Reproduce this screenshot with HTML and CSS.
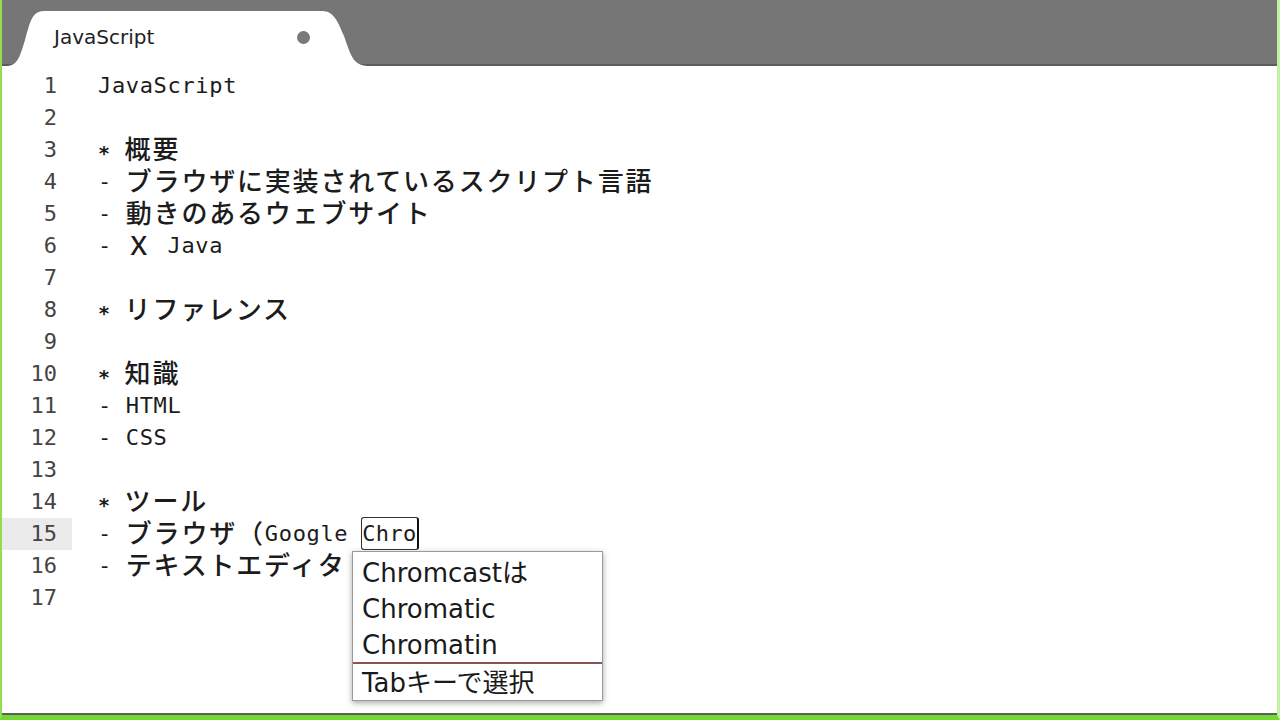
FILE: index.html
```html
<!DOCTYPE html>
<html lang="ja">
<head>
  <meta charset="UTF-8" />
  <title>JavaScript</title>
  <link rel="stylesheet" href="styles.css">
</head>
<body>
  <div class="frame">
    <!-- Tab bar -->
    <header class="tabbar">
      <div class="tab">
        <svg class="tab-shape" width="370" height="66" viewBox="0 0 370 66">
          <path d="M4,66 C16,66 18,56 23,40 C28,22 30,11 42,11 L320,11 C332,11 336,22 342,36 C348,52 350,66 366,66 Z" fill="#ffffff"/>
        </svg>
        <span class="tab-label">JavaScript</span>
        <span class="tab-dot"></span>
      </div>
    </header>

    <!-- Editor -->
    <main class="editor">
      <div class="line"><span class="num">1</span><span class="code">JavaScript</span></div>
      <div class="line"><span class="num">2</span><span class="code"></span></div>
      <div class="line"><span class="num">3</span><span class="code"><span class="star">*</span> <span class="jp">概要</span></span></div>
      <div class="line"><span class="num">4</span><span class="code">- <span class="jp">ブラウザに実装されているスクリプト言語</span></span></div>
      <div class="line"><span class="num">5</span><span class="code">- <span class="jp">動きのあるウェブサイト</span></span></div>
      <div class="line"><span class="num">6</span><span class="code">- <span class="jp">Ｘ</span> Java</span></div>
      <div class="line"><span class="num">7</span><span class="code"></span></div>
      <div class="line"><span class="num">8</span><span class="code"><span class="star">*</span> <span class="jp">リファレンス</span></span></div>
      <div class="line"><span class="num">9</span><span class="code"></span></div>
      <div class="line"><span class="num">10</span><span class="code"><span class="star">*</span> <span class="jp">知識</span></span></div>
      <div class="line"><span class="num">11</span><span class="code">- HTML</span></div>
      <div class="line"><span class="num">12</span><span class="code">- CSS</span></div>
      <div class="line"><span class="num">13</span><span class="code"></span></div>
      <div class="line"><span class="num">14</span><span class="code"><span class="star">*</span> <span class="jp">ツール</span></span></div>
      <div class="line current"><span class="num">15</span><span class="code">- <span class="jp">ブラウザ（</span>Google <span class="composing">Chro</span></span></div>
      <div class="line"><span class="num">16</span><span class="code">- <span class="jp">テキストエディタ</span></span></div>
      <div class="line"><span class="num">17</span><span class="code"></span></div>

      <!-- Autocomplete popup -->
      <ul class="suggest">
        <li>Chromcastは</li>
        <li>Chromatic</li>
        <li class="last">Chromatin</li>
        <li class="hint">Tabキーで選択</li>
      </ul>
    </main>

    <div class="statusline"></div>
  </div>
</body>
</html>
```

FILE: styles.css
```css
:root {
  --bar-color: #767676;
  --green: #72d832;
  --text-color: #1c1c1c;
  --num-color: #444444;
}

* {
  box-sizing: border-box;
  margin: 0;
  padding: 0;
}

body {
  background: #ffffff;
  overflow: hidden;
}

.frame {
  width: 1280px;
  height: 720px;
  display: flex;
  flex-direction: column;
  border-left: 2px solid #8ee04f;
  border-right: 3px solid #c4f2a4;
  border-bottom: 5px solid var(--green);
}

/* Tab bar */
.tabbar {
  height: 66px;
  background-color: var(--bar-color);
  border-bottom: 2px solid #5c5c5c;
  display: flex;
}

.tab {
  position: relative;
  width: 370px;
  height: 64px;
  display: flex;
  align-items: center;
  padding: 10px 62px 0 52px;
}

.tab-shape {
  position: absolute;
  left: 0;
  top: 0;
  z-index: 0;
}

.tab-label {
  position: relative;
  font-family: "DejaVu Sans", sans-serif;
  font-size: 20px;
  color: #222222;
}

.tab-dot {
  position: relative;
  margin-left: auto;
  width: 13px;
  height: 13px;
  border-radius: 50%;
  background-color: #7a7a7a;
}

/* Editor */
.editor {
  position: relative;
  flex: 1;
  padding-top: 4px;
}

.line {
  display: flex;
  height: 32px;
  line-height: 32px;
}

.num {
  width: 70px;
  padding-right: 15px;
  text-align: right;
  font-family: "DejaVu Sans Mono", monospace;
  font-size: 22px;
  color: var(--num-color);
}

.current .num {
  background-color: #ebebeb;
}

.code {
  padding-left: 26px;
  font-family: "DejaVu Sans Mono", monospace;
  font-size: 22px;
  letter-spacing: 0.66px;
  color: var(--text-color);
  white-space: pre;
}

.star {
  font-weight: bold;
  font-size: 20px;
  line-height: 1;
  vertical-align: -3px;
}

.jp {
  font-family: "Noto Sans CJK JP", sans-serif;
  font-size: 26px;
  font-weight: 500;
  line-height: 1;
  letter-spacing: 1.8px;
  vertical-align: -2px;
}

.composing {
  margin-left: -1px;
  padding: 3px 0;
  border: 1px solid #333333;
  border-right: 2px solid #111111;
  border-radius: 3px;
  letter-spacing: 0.4px;
}

/* Autocomplete popup */
.suggest {
  position: absolute;
  left: 350px;
  top: 485px;
  width: 251px;
  height: 150px;
  list-style: none;
  padding-top: 3px;
  background-color: #ffffff;
  border: 1px solid #9a9a9a;
  box-shadow: 0 2px 6px rgba(0, 0, 0, 0.35);
  font-family: "DejaVu Sans", "Noto Sans CJK JP", sans-serif;
  font-size: 26px;
  color: #1a1a1a;
}

.suggest li {
  height: 36px;
  line-height: 36px;
  padding-left: 9px;
  white-space: nowrap;
}

.suggest li.last {
  height: 35px;
}

.suggest li.hint {
  height: 37px;
  line-height: 34px;
  padding-top: 2px;
  border-top: 2px solid #8a5454;
}

.statusline {
  height: 2px;
  background-color: #5e5e5e;
}
```
